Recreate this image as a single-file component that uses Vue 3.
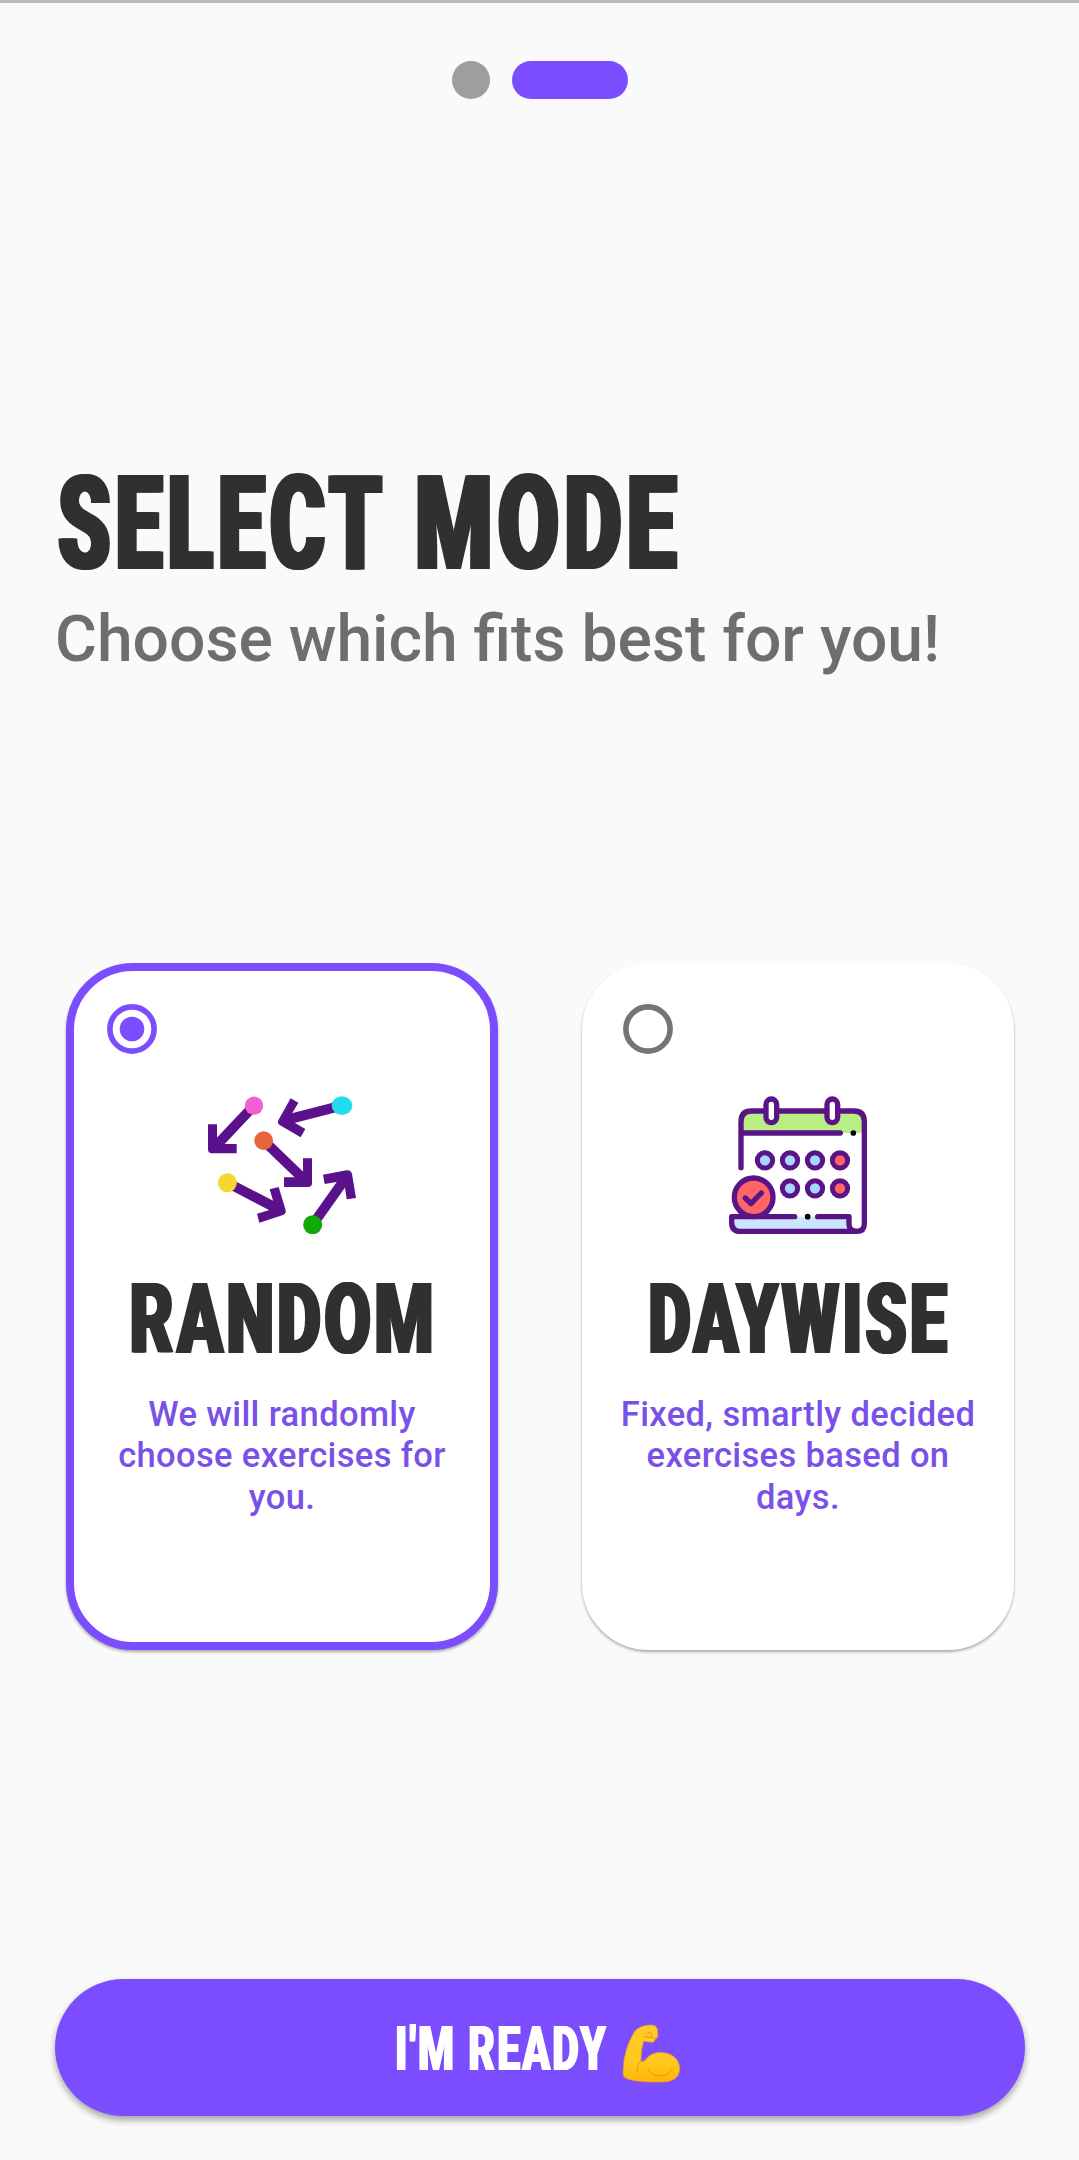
<script setup>
import { ref } from 'vue'

const selected = ref('random')
const modes = [
  { id: 'random', title: 'RANDOM', lines: ['We will randomly', 'choose exercises for', 'you.'] },
  { id: 'daywise', title: 'DAYWISE', lines: ['Fixed, smartly decided', 'exercises based on', 'days.'] },
]
const blueDays = [[165, 240], [240, 240], [315, 240], [240, 324], [315, 324]]
const redDays = [[390, 240], [390, 324]]
</script>

<template>
  <main class="screen">
    <div class="steps">
      <span class="step"></span>
      <span class="step active"></span>
    </div>

    <header class="intro">
      <h1>
        <span class="word first"><span class="condensed">SELECT</span></span>
        <span class="word second"><span class="condensed">MODE</span></span>
      </h1>
      <p>Choose which fits best for you!</p>
    </header>

    <section class="modes">
      <article
        v-for="mode in modes"
        :key="mode.id"
        class="card"
        :class="{ selected: selected === mode.id }"
        @click="selected = mode.id"
      >
        <svg class="radio" viewBox="0 0 50 50">
          <circle class="ring" cx="25" cy="25" r="22.100" />
          <circle v-if="selected === mode.id" class="dot" cx="25" cy="25" r="12.300" />
        </svg>

        <svg v-if="mode.id === 'random'" class="icon arrows" viewBox="54 47 444 414">
          <g fill="none" stroke="#5b108c" stroke-width="30">
            <path d="M192 76 72 203" />
            <path d="M455 76 283 120" />
            <path d="M221 181 348 303" />
            <path d="M112 307 270 389" />
            <path d="M368 433 472 286" />
          </g>
          <g fill="#5b108c">
            <path d="M54 132H81V191H140V219H66Q54 219 54 207Z" />
            <path d="M366 234H339V291H282V320H354Q366 320 366 308Z" />
            <path d="M302 54 325 67 296 117 346 146 332 171 269 134Q261 129 265 120Z" />
            <path d="M239 327 266 320 287 390Q289 400 279 404L208 427 201 400 256 384Z" />
            <path d="M399 283 469 270Q483 268 486 281L498 353 470 357 462 301 404 311Z" />
          </g>
          <circle cx="192" cy="76" r="27.500" fill="#f25fd0" />
          <ellipse cx="456" cy="76" rx="31" ry="28" fill="#25dcec" />
          <circle cx="221" cy="181" r="28" fill="#e8643a" />
          <circle cx="112" cy="307" r="28.500" fill="#f5d732" />
          <circle cx="368" cy="433" r="28.500" fill="#12a805" />
        </svg>

        <svg v-else class="icon" viewBox="57 47 414 414">
          <path d="M93 158V122Q93 92 123 92H433Q463 92 463 122V158Z" fill="#b9ee82" />
          <path d="M65 409H417V430Q419 454 441 454H92Q65 454 65 428Z" fill="#cae5fc" />
          <g fill="none" stroke="#5a1487" stroke-width="16" stroke-linecap="round" stroke-linejoin="round">
            <path d="M93 262V124Q93 92 125 92H431Q463 92 463 124V431Q463 453 440 453Q417 453 417 431V409H323" />
            <path d="M101 158H391" />
            <path d="M254 409H65V427Q65 453 92 453H440" />
            <rect x="168" y="56" width="32" height="71" rx="16" fill="#fff" />
            <rect x="351" y="56" width="32" height="71" rx="16" fill="#fff" />
            <circle cx="131" cy="351" r="58" fill="#ff6565" />
            <path d="M106 353 123 370 154 338" />
          </g>
          <g fill="#a6d5fd" stroke="#5a1487" stroke-width="15">
            <circle v-for="[x, y] in blueDays" :key="`${x}-${y}`" :cx="x" :cy="y" r="23" />
          </g>
          <g fill="#ff6565" stroke="#5a1487" stroke-width="15">
            <circle v-for="[x, y] in redDays" :key="`${x}-${y}`" :cx="x" :cy="y" r="23" />
          </g>
          <circle cx="430" cy="158" r="8.500" />
          <circle cx="293" cy="409" r="8.500" />
        </svg>

        <h2><span class="condensed" :class="mode.id">{{ mode.title }}</span></h2>
        <p class="description">
          <span v-for="line in mode.lines" :key="line">{{ line }}</span>
        </p>
      </article>
    </section>

    <button class="ready">
      <span class="ready-label"><span class="condensed label">I'M READY</span></span>
      <svg class="biceps" viewBox="758 103 176 178">
        <defs>
          <linearGradient id="skin" x1="0" y1="0" x2="0" y2="1">
            <stop offset="0" stop-color="#ffc928" />
            <stop offset=".65" stop-color="#ffc81e" />
            <stop offset="1" stop-color="#ffb404" />
          </linearGradient>
        </defs>
        <path d="M796 124Q812 107 842 106Q861 105 864 120L865 139Q865 145 858 147L855 154Q853 159 844 158L822 155Q813 185 814 216Q825 218 832 207Q844 189 875 189Q909 190 924 213Q938 238 924 261Q913 277 880 278H840Q793 277 769 267Q760 263 760 249Q761 179 796 124Z" fill="url(#skin)" stroke="#e89f17" stroke-width="2" />
        <path d="M812 216Q800 232 803 250M834 238Q845 260 872 260Q901 257 908 237M814 216Q823 218 830 211M834 131Q842 124 847 132Q849 140 842 143Q833 146 824 140M842 143 860 147" fill="none" stroke="#e59a18" stroke-width="3" stroke-linecap="round" />
      </svg>
    </button>
  </main>
</template>

<style>
body {
  background: #fafafa;
}
</style>

<style scoped>
.screen {
  box-sizing: border-box;
  height: 2160px;
  border-top: 3px solid #bababa;
  padding: 57.5px 54.5px 44.5px 55px;
  display: flex;
  flex-direction: column;
  background: #fafafa;
  font-family: Roboto, "Liberation Sans", sans-serif;
  overflow: hidden;
}
.steps {
  display: flex;
  justify-content: center;
  gap: 22px;
}
.step {
  width: 38.5px;
  height: 38.5px;
  border-radius: 20px;
  background: #9e9e9e;
}
.step.active {
  width: 115.5px;
  background: #7c4dff;
}
h1,
h2,
p {
  margin: 0;
}
.condensed {
  display: inline-block;
  white-space: nowrap;
  font-weight: 900;
  color: #303030;
}
.intro {
  margin-top: 355px;
}
h1 {
  display: flex;
  height: 140px;
  line-height: 141px;
  font-size: 132px;
}
.word {
  width: 358px;
  margin-left: 3px;
}
.word.second {
  width: 280px;
  margin-left: -1px;
}
.word .condensed {
  transform: scaleX(0.635);
  transform-origin: left;
  letter-spacing: 8px;
  text-shadow: 3.5px 0 currentColor, -3.5px 0 currentColor;
}
.word.second .condensed {
  transform: scaleX(0.67);
}
.intro p {
  height: 92px;
  line-height: 91px;
  font-size: 64.2px;
  font-weight: 500;
  color: #6e6e6e;
}
.modes {
  display: flex;
  gap: 84px;
  margin: 276.5px 10.5px 0 11px;
}
.card {
  box-sizing: border-box;
  width: 432px;
  height: 687px;
  border: 8px solid #fff;
  border-radius: 67px;
  padding: 33px;
  display: flex;
  flex-direction: column;
  align-items: center;
  background: #fff;
  box-shadow: 0 2px 3px rgba(0, 0, 0, 0.32);
}
.card.selected {
  border-color: #7c4dff;
}
.radio {
  width: 50px;
  height: 50px;
  flex: none;
  align-self: flex-start;
}
.ring {
  fill: none;
  stroke: #757575;
  stroke-width: 5.6;
}
.selected .ring {
  stroke: #7c4dff;
}
.dot {
  fill: #7c4dff;
}
.icon {
  width: 138px;
  height: 138px;
  margin-top: 42px;
  flex: none;
}
.icon.arrows {
  width: 148px;
}
h2 {
  height: 110px;
  margin-top: 30.5px;
  line-height: 111px;
  font-size: 98.5px;
}
.random,
.daywise {
  margin-right: -5px;
  letter-spacing: 5px;
  transform: translateX(-1px) scaleX(0.685);
  text-shadow: 2.5px 0 currentColor, -2.5px 0 currentColor;
}
.daywise {
  transform: translateX(-1px) scaleX(0.667);
}
.description {
  margin-top: 20px;
  text-align: center;
  font-size: 34.5px;
  line-height: 41.4px;
  font-weight: 500;
  letter-spacing: 0.37px;
  color: #7951e8;
}
.description span {
  display: block;
  white-space: nowrap;
}
.ready {
  height: 137px;
  margin-top: auto;
  border: 0;
  border-radius: 69px;
  padding: 0;
  display: flex;
  align-items: center;
  justify-content: center;
  gap: 15px;
  background: #7c4dff;
  box-shadow: 0 4px 7px rgba(0, 0, 0, 0.35);
  font-family: inherit;
}
.ready-label {
  width: 212px;
  padding-top: 6px;
  font-size: 60.5px;
  line-height: 80px;
  text-align: left;
}
.label {
  color: #fff;
  letter-spacing: 3px;
  transform: scaleX(0.68);
  transform-origin: left;
  text-shadow: 1.2px 0 currentColor, -1px 0 currentColor;
}
.biceps {
  width: 59px;
  height: 59px;
  margin: 13px 4px 0 0;
}
</style>
